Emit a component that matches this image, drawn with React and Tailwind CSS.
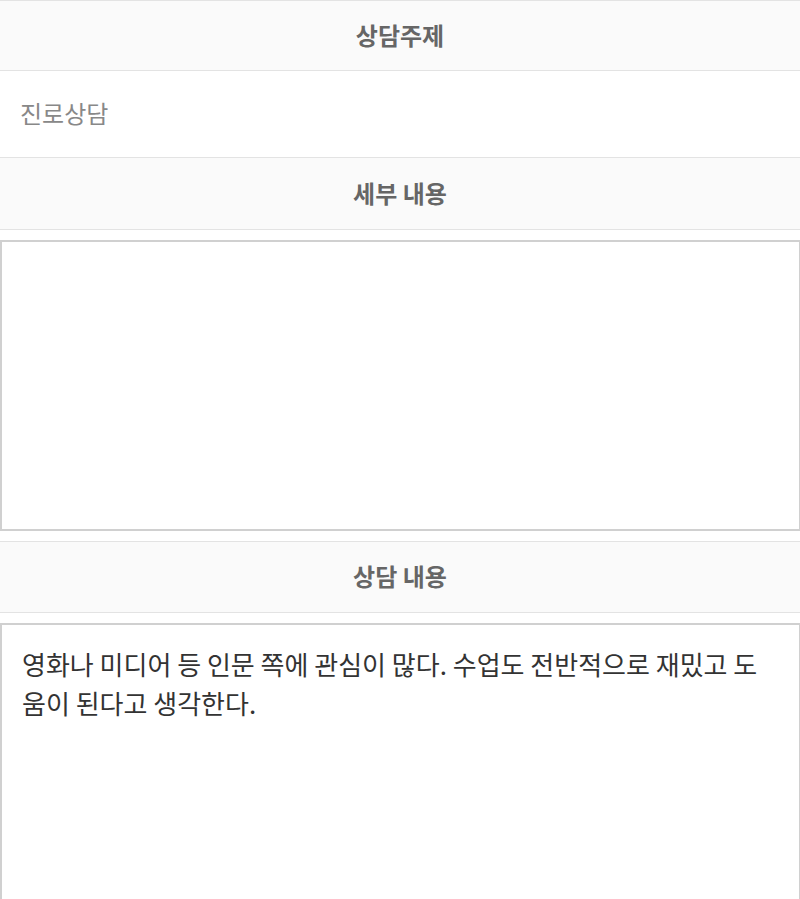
import { useState } from 'react';

const font = { fontFamily: '"Noto Sans CJK KR", "Noto Sans", sans-serif' };

function SectionHeader({ title, className = 'h-[72px]' }) {
    return (
        <div className={`${className} border-y border-[#e3e3e3] bg-[#fafafa] flex items-center justify-center`}>
            <span className="text-[24px] font-bold text-[#666] -mt-[2px]">{title}</span>
        </div>
    );
}

export default function App() {
    const [memo, setMemo] = useState(
        '영화나 미디어 등 인문 쪽에 관심이 많다. 수업도 전반적으로 재밌고 도움이 된다고 생각한다.'
    );

    return (
        <div className="w-[800px] h-[899px] overflow-hidden bg-white" style={font}>
            <SectionHeader title="상담주제" className="h-[71px]" />
            <div className="h-[86px] flex items-center px-5">
                <span className="text-[24px] text-[#888] -mt-[2px]">진로상담</span>
            </div>
            <SectionHeader title="세부 내용" className="h-[73px]" />
            <div className="pt-[10px] pb-[10px]">
                <textarea
                    className="block w-[801px] h-[291px] border-2 border-[#d0d0d0] bg-white outline-none resize-none p-5 text-[26px] leading-[39px] text-[#333]"
                    style={font}
                    defaultValue=""
                />
            </div>
            <SectionHeader title="상담 내용" className="h-[72px]" />
            <div className="pt-[10px]">
                <textarea
                    className="block w-[801px] h-[300px] border-2 border-[#d0d0d0] bg-white outline-none resize-none pl-5 pr-[26px] pt-[19px] text-[26px] leading-[39px] text-[#333] break-all"
                    style={font}
                    value={memo}
                    onChange={(e) => setMemo(e.target.value)}
                />
            </div>
        </div>
    );
}
